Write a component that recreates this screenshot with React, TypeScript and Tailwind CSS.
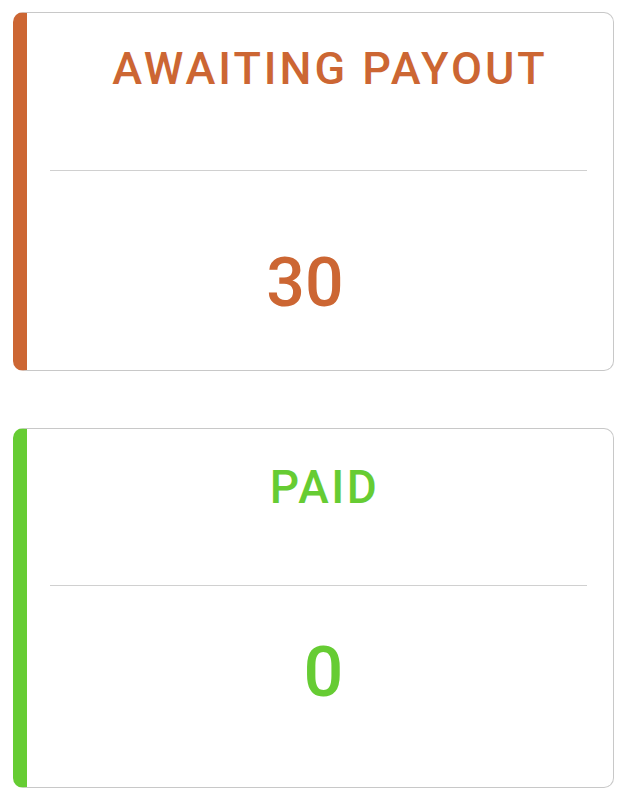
export default function App() {
  return (
    <div className="min-h-screen bg-white px-[13px] pt-[12px] flex flex-col gap-[57px] font-['Roboto',sans-serif]">
      {/* Awaiting payout */}
      <div className="h-[359px] rounded-[10px] border border-[#c8c8c8] border-l-[14px] border-l-[#cc6633] flex flex-col">
        <div className="pt-[33px] pl-[20px] h-[157px] text-center text-[45px] leading-none font-medium tracking-[3px] text-[#cc6633]">
          AWAITING PAYOUT
        </div>
        <div className="mx-[23px] mr-[26px] h-px bg-[#d0d0d0]" />
        <div className="pt-[78px] pr-[30px] text-center text-[68px] leading-none font-medium text-[#cc6633]">
          30
        </div>
      </div>

      {/* Paid */}
      <div className="h-[360px] rounded-[10px] border border-[#c8c8c8] border-l-[14px] border-l-[#66cc33] flex flex-col">
        <div className="pt-[35px] pl-[9px] h-[156px] text-center text-[46px] leading-none font-medium tracking-[2.5px] text-[#66cc33]">
          PAID
        </div>
        <div className="mx-[23px] mr-[26px] h-px bg-[#d0d0d0]" />
        <div className="pt-[51px] pl-[7px] text-center text-[70px] leading-none font-medium text-[#66cc33]">
          0
        </div>
      </div>
    </div>
  );
}
